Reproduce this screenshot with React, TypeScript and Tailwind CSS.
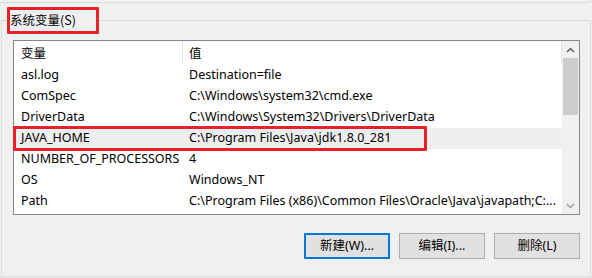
import React from "react";

const rows: [string, string][] = [
  ["asl.log", "Destination=file"],
  ["ComSpec", "C:\\Windows\\system32\\cmd.exe"],
  ["DriverData", "C:\\Windows\\System32\\Drivers\\DriverData"],
  ["JAVA_HOME", "C:\\Program Files\\Java\\jdk1.8.0_281"],
  ["NUMBER_OF_PROCESSORS", "4"],
  ["OS", "Windows_NT"],
  ["Path", "C:\\Program Files (x86)\\Common Files\\Oracle\\Java\\javapath;C:..."],
  ["", ""],
];

function Btn({ label, focused }: { label: string; focused?: boolean }) {
  return (
    <div
      className={
        focused
          ? "w-[86px] h-[26px] flex items-center justify-center bg-[#e1e1e1] border-2 border-[#0078d7] text-[12.5px] text-black"
          : "w-[86px] h-[26px] flex items-center justify-center bg-[#e1e1e1] border border-[#adadad] text-[12.5px] text-black"
      }
    >
      {label}
    </div>
  );
}

export default function App() {
  return (
    <div
      className="w-[592px] h-[278px] bg-[#f0f0f0] relative overflow-hidden text-black"
      style={{ fontFamily: '"Noto Sans", "Noto Sans CJK SC", sans-serif' }}
    >
      <div className="h-[3px] w-[591px] border-b border-r border-[#dcdcdc]" />
      <div className="mt-[17px] ml-[1px] w-[590px] h-[257px] border border-[#dcdcdc] relative">
        {/* list view */}
        <div className="mt-[19px] ml-[11px] w-[567px] h-[175px] border border-[#828790] bg-white flex overflow-hidden">
          <div className="flex-1 flex flex-col">
            <div className="h-[24px] flex items-center text-[12.5px] shrink-0">
              <div className="w-[169px] h-full flex items-center pl-[7px] border-r border-[#e5e5e5]">
                <span style={{ fontFamily: '"Noto Sans CJK SC", sans-serif' }}>变量</span>
              </div>
              <div className="flex-1 h-full flex items-center pl-[6px] border-r border-[#e5e5e5]">
                <span style={{ fontFamily: '"Noto Sans CJK SC", sans-serif' }}>值</span>
              </div>
            </div>
            {rows.map(([k, v], i) => (
              <div
                key={i}
                className={
                  i === 3
                    ? "h-[21px] shrink-0 flex items-center text-[12.5px] bg-[#efefef]"
                    : "h-[21px] shrink-0 flex items-center text-[12.5px]"
                }
              >
                <div className="w-[170px] pl-[7px] whitespace-nowrap">{k}</div>
                <div className="flex-1 pl-[5px] whitespace-nowrap overflow-hidden">{v}</div>
              </div>
            ))}
          </div>
          {/* scrollbar */}
          <div className="w-[17px] bg-[#f0f0f0] flex flex-col shrink-0">
            <div className="h-[17px] flex items-center justify-center">
              <svg width="9" height="6" viewBox="0 0 9 6">
                <path d="M1 5 L4.5 1.5 L8 5" stroke="#606060" strokeWidth="1.5" fill="none" />
              </svg>
            </div>
            <div className="mx-[1px] h-[57px] bg-[#cdcdcd]" />
            <div className="flex-1" />
            <div className="h-[17px] flex items-center justify-center">
              <svg width="9" height="6" viewBox="0 0 9 6">
                <path d="M1 1 L4.5 4.5 L8 1" stroke="#a0a0a0" strokeWidth="1.5" fill="none" />
              </svg>
            </div>
          </div>
        </div>
        {/* buttons */}
        <div className="mt-[18px] ml-[302px] flex gap-[9px]">
          <Btn label="新建(W)..." focused />
          <Btn label="编辑(I)..." />
          <Btn label="删除(L)" />
        </div>
        {/* highlight box around JAVA_HOME row */}
        <div className="absolute left-[11px] top-[105px] w-[414px] h-[25px] border-[3px] border-[#e8202a] rounded-[1px]" />
      </div>
      {/* group label with red box */}
      <div className="absolute left-[7px] top-[7px] w-[92px] h-[27px] border-[3px] border-[#e8202a] rounded-[1px] bg-[#f0f0f0] flex items-center pl-[0px] text-[12.5px]">
        <span style={{ fontFamily: '"Noto Sans CJK SC", sans-serif' }}>系统变量(S)</span>
      </div>
    </div>
  );
}
